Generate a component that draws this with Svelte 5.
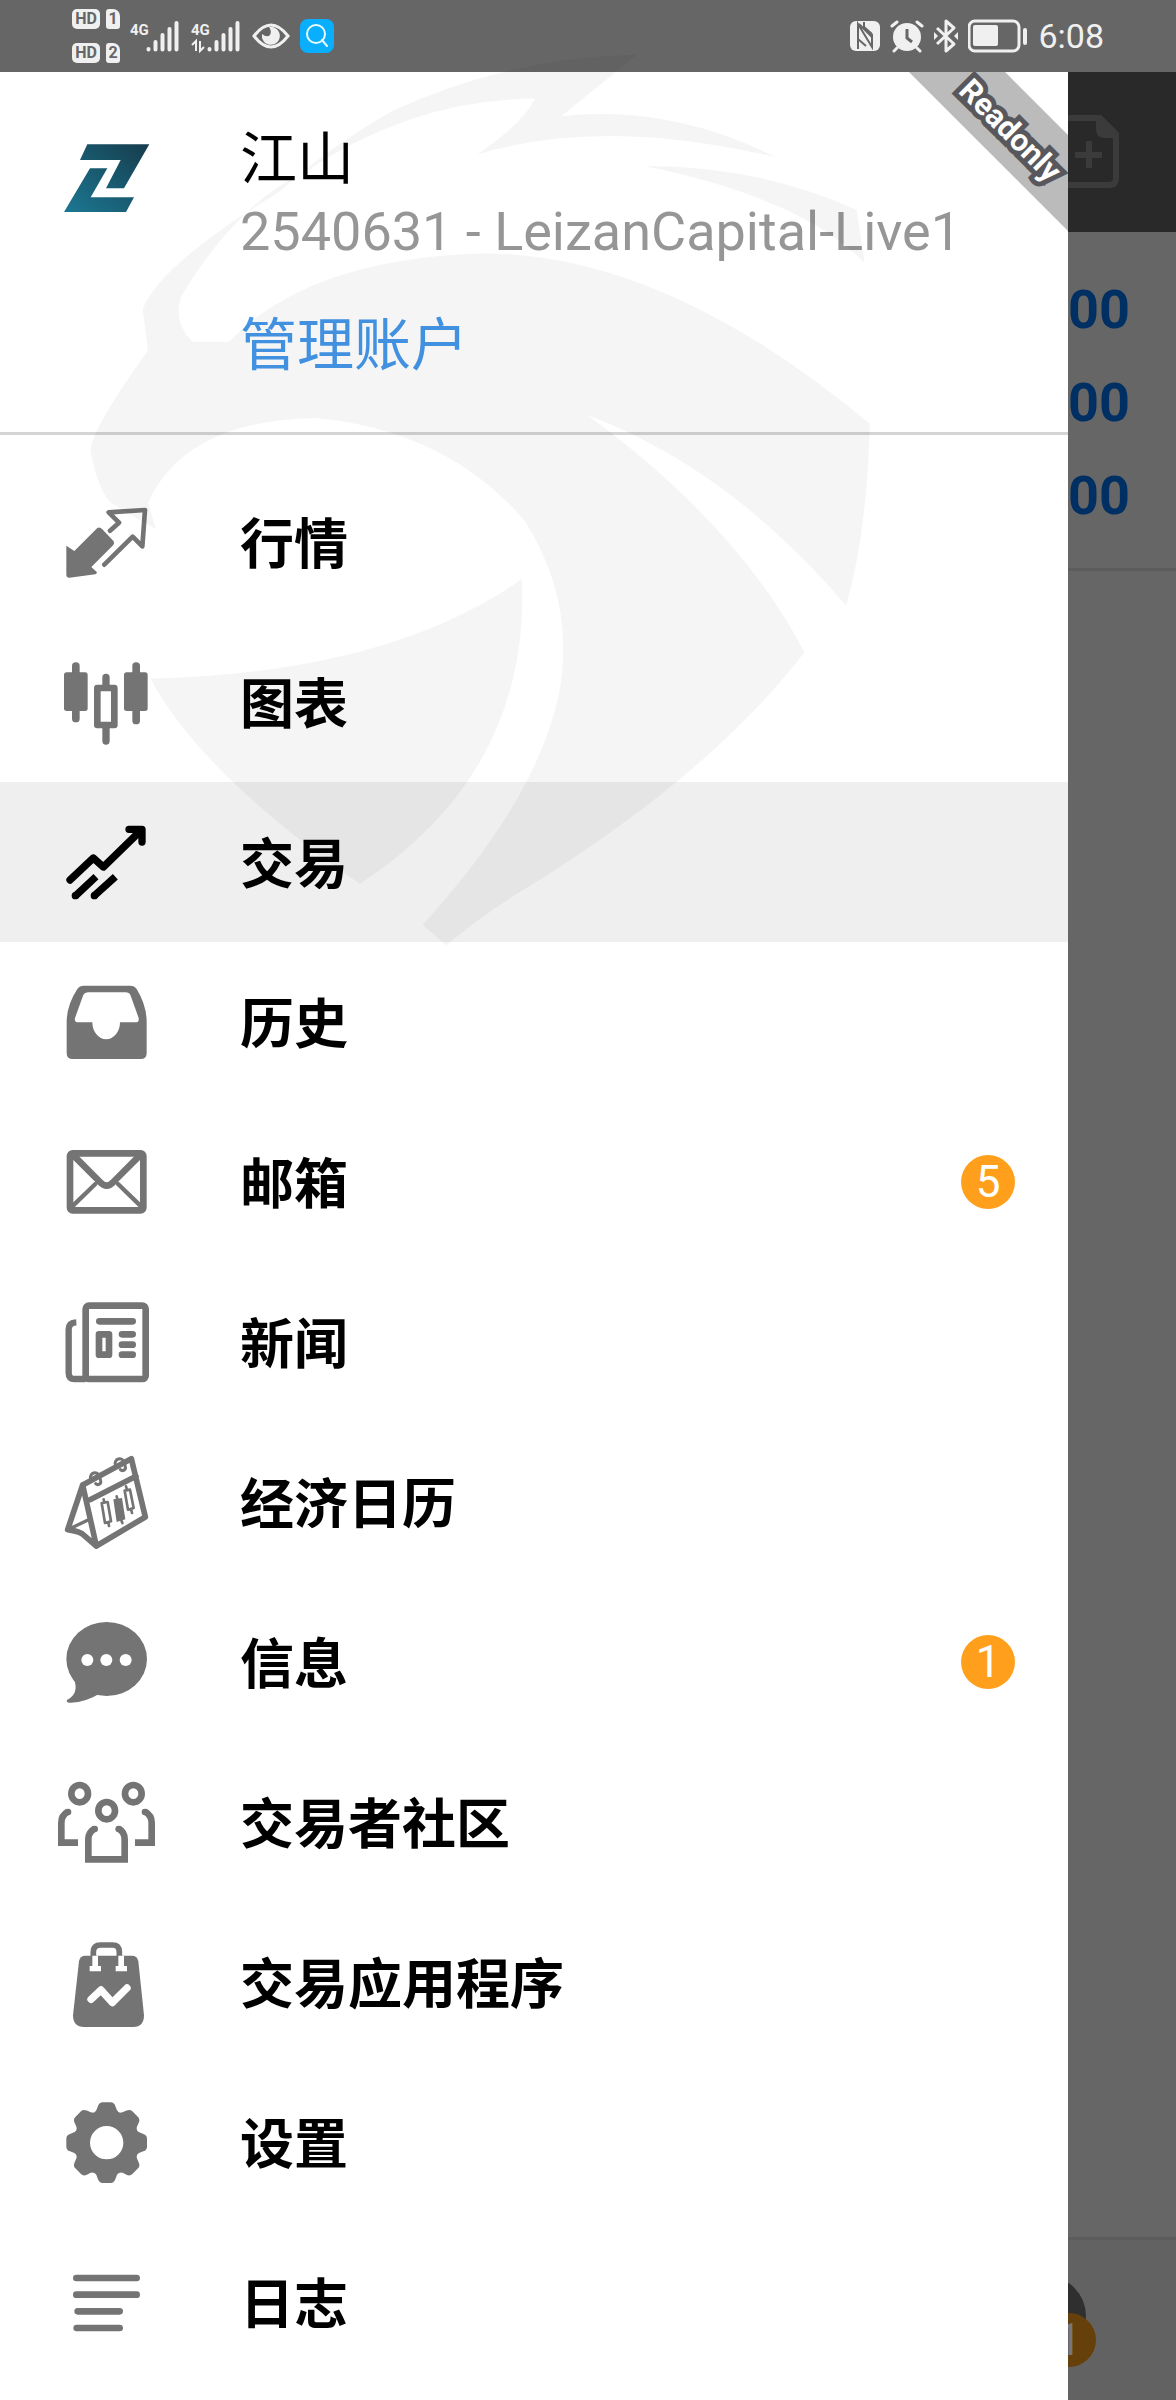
<script lang="ts">
  import type { Snippet } from 'svelte'

  interface MenuItem {
    label: string
    icon: Snippet
    badge?: number
  }

  const items: MenuItem[] = [
    { label: '行情', icon: quotes },
    { label: '图表', icon: charts },
    { label: '交易', icon: trade },
    { label: '历史', icon: history },
    { label: '邮箱', icon: mail, badge: 5 },
    { label: '新闻', icon: news },
    { label: '经济日历', icon: calendar },
    { label: '信息', icon: chat, badge: 1 },
    { label: '交易者社区', icon: community },
    { label: '交易应用程序', icon: apps },
    { label: '设置', icon: settings },
    { label: '日志', icon: journal }
  ]

  const amounts = ['00', '00', '00']
  const teeth = [0, 45, 90, 135, 180, 225, 270, 315]

  let active = $state('交易')
</script>

{#snippet quotes()}
  <svg class="icon" viewBox="0 0 300 300">
    <path class="line" stroke-width="14" d="M162 116 189 92 158 61 267 54 259 163 230 134 145 218" />
    <path d="M31 161 55 177 124 108Q132 104 139 112L173 148Q176 154 172 159L106 225 123 241Q122 246 118 247L40 257Q31 257 31 248Z" />
  </svg>
{/snippet}

{#snippet charts()}
  <svg class="icon" viewBox="0 0 300 300">
    <rect x="24" y="61" width="71" height="116" rx="8" />
    <rect x="48" y="31" width="23" height="180" rx="11" />
    <rect x="204" y="61" width="71" height="116" rx="8" />
    <rect x="229" y="31" width="23" height="186" rx="11" />
    <rect class="line" stroke-width="20" x="124" y="108" width="51" height="111" />
    <path class="line" stroke-width="22" d="M150 76V104M150 224V267" />
  </svg>
{/snippet}

{#snippet trade()}
  <svg class="icon" viewBox="0 0 300 300">
    <path class="line" stroke-width="22" d="M42 204 112 138 142 165 256 54M219 52H258V90" />
    <path class="line butt" stroke-width="22" d="M58 252 120 194M114 252 178 194" />
    <circle cx="58" cy="251" r="11" />
    <circle cx="115" cy="251" r="11" />
  </svg>
{/snippet}

{#snippet history()}
  <svg class="icon" viewBox="0 0 300 300">
    <path
      fill-rule="evenodd"
      d="M84 41H222Q236 41 242 51 272 100 272 150V243Q272 261 254 261H50Q32 261 32 243V150Q32 100 64 51 70 41 84 41ZM98 61H208Q220 61 224 71L248 138Q250 151 238 151H192A41 50 0 0 1 109 151H68Q54 151 57 138L81 71Q86 61 98 61Z"
    />
  </svg>
{/snippet}

{#snippet mail()}
  <svg class="icon" viewBox="0 0 300 300">
    <rect class="line" stroke-width="20" x="42" y="64" width="220" height="171" rx="8" />
    <path class="line" stroke-width="20" d="M50 68 132 150Q152 172 172 150L254 68" />
    <path class="line" stroke-width="13" d="M118 156 48 224M186 156 256 224" />
  </svg>
{/snippet}

{#snippet news()}
  <svg class="icon" viewBox="0 0 300 300">
    <rect class="line" stroke-width="20" x="89" y="41" width="180" height="220" rx="10" />
    <path class="line butt" stroke-width="19" d="M61 91Q38 92 38 112V242Q38 261 56 261H89" />
    <path class="line" stroke-width="20" d="M130 88H230M198 127H230M198 158H230M198 188H230" />
    <rect class="line" stroke-width="20" x="129" y="127" width="30" height="61" />
  </svg>
{/snippet}

{#snippet calendar()}
  <svg class="icon" viewBox="0 0 300 300">
    <path class="line" stroke-width="17" d="M80 99 226 20 268 195 121 282ZM102 143 240 73M80 99 35 233Q72 238 84 250L121 282" />
    <path class="line" stroke-width="10" d="M44 229 96 204" />
    <path class="line" stroke-width="9" d="M104 80A13 13 0 0 1 130 72L134 86A9 9 0 0 1 119 95M178 38A13 13 0 0 1 204 30L208 44A9 9 0 0 1 193 53" />
    <path class="line" stroke-width="8" d="M137 153 155 150 165 208 147 213ZM143 142 145 152M157 211 159 222M206 116 222 113 233 168 216 173ZM210 103 213 114M225 172 228 183M182 133 184 142M196 205 199 213" />
    <path d="M172 142 198 138 208 202 182 210Z" />
  </svg>
{/snippet}

{#snippet chat()}
  <svg class="icon" viewBox="0 0 300 300">
    <ellipse cx="152" cy="141" rx="121" ry="111" />
    <path d="M54 200Q70 245 33 264 29 273 45 272 90 270 130 245Z" />
    <g fill="#fff">
      <circle cx="94" cy="144" r="18" />
      <circle cx="151" cy="144" r="18" />
      <circle cx="209" cy="144" r="18" />
    </g>
  </svg>
{/snippet}

{#snippet community()}
  <svg class="icon" viewBox="0 0 300 300">
    <g class="line" stroke-width="20">
      <ellipse cx="71" cy="65" rx="25" ry="26" />
      <ellipse cx="232" cy="65" rx="25" ry="26" />
      <ellipse cx="152" cy="116" rx="25" ry="26" />
    </g>
    <path
      class="line butt"
      stroke-width="20"
      d="M116 170Q97 180 97 202V262H206V202Q206 180 188 170M36 119Q16 130 16 152V212H66M267 119Q287 130 287 152V212H237"
    />
    <circle cx="116" cy="171" r="10" />
    <circle cx="188" cy="171" r="10" />
    <circle cx="36" cy="120" r="10" />
    <circle cx="267" cy="120" r="10" />
  </svg>
{/snippet}

{#snippet apps()}
  <svg class="icon" viewBox="0 0 300 300">
    <path d="M88 71H228Q244 71 247 88L264 250Q264 285 232 285H84Q51 285 51 250L69 88Q72 71 88 71Z" />
    <path class="line butt" stroke-width="17" d="M112 75V60Q112 39 134 39H170Q190 39 190 60V75" />
    <path fill="#fff" d="M109 71H126V102H135V118H101V102H109ZM187 71H204V102H213V118H179V102H187Z" />
    <path class="line cut" stroke-width="22" d="M105 202 135 174 169 212 213 168" />
  </svg>
{/snippet}

{#snippet settings()}
  <svg class="icon" viewBox="0 0 300 300">
    <circle class="line" stroke-width="48" cx="152" cy="152" r="74" />
    {#each teeth as angle (angle)}
      <path transform="rotate({angle} 152 152)" d="M112 66Q123 56 126 42 130 31 140 31H164Q174 31 178 42 181 56 192 66Z" />
    {/each}
  </svg>
{/snippet}

{#snippet journal()}
  <svg class="icon" viewBox="0 0 300 300">
    <path class="line" stroke-width="20" d="M61 78H242M61 128H242M65 178H191M62 228H191" />
  </svg>
{/snippet}

{#snippet signal(data: boolean)}
  <svg class="signal" viewBox="0 0 50 34">
    <text x="0" y="16">4G</text>
    {#if data}
      <path d="M1 26 5 22V32M9 22V32L13 28" fill="none" stroke="#f0f0f0" stroke-width="2" />
    {/if}
    <path d="M18.500 30.500V30M25.500 30.500V23M32.500 30.500V16M39.500 30.500V10M46.500 30.500V4" stroke="#f0f0f0" stroke-width="4" stroke-linecap="round" />
  </svg>
{/snippet}

<div class="screen">
  <header class="status">
    <div class="sims">
      {#each [1, 2] as sim (sim)}
        <div class="sim"><span class="hd">HD</span><span class="slot">{sim}</span></div>
      {/each}
    </div>
    {@render signal(false)}
    {@render signal(true)}
    <svg class="eye" viewBox="0 0 38 28">
      <path d="M2 14Q19-8 36 14 19 36 2 14Z" fill="none" stroke="#f0f0f0" stroke-width="3" />
      <path d="M17 5A9 9 0 1 1 10 12Q15 16 18 13 20 9 17 5Z" fill="#f0f0f0" />
    </svg>
    <svg class="finder" viewBox="0 0 34 34">
      <rect width="34" height="34" rx="8" fill="#09aefc" />
      <circle cx="16" cy="15" r="9" fill="none" stroke="#e8fbff" stroke-width="2" />
      <path d="M22 21 27 27" stroke="#e8fbff" stroke-width="2" stroke-linecap="round" />
    </svg>
    <div class="system">
      <svg width="30" height="34" viewBox="0 0 30 34">
        <rect y="2" width="30" height="30" rx="6" fill="#f0f0f0" />
        <path d="M8 30V5L22 28V15M9 5 22 18M14 3V8L22 15M8 20 16 27" fill="none" stroke="#666" stroke-width="2" />
      </svg>
      <svg width="34" height="34" viewBox="0 0 34 34">
        <circle cx="17" cy="18" r="14" fill="#f0f0f0" />
        <path d="M17 10V19L22 23" fill="none" stroke="#666" stroke-width="3" />
        <path d="M2 7 7 3M32 7 27 3M7 29 4 32M27 29 30 32" stroke="#f0f0f0" stroke-width="3" stroke-linecap="round" />
      </svg>
      <svg width="24" height="36" viewBox="0 0 24 36">
        <path d="M3 10 20 26 12 33V3L20 10 3 26" fill="none" stroke="#f0f0f0" stroke-width="3" stroke-linejoin="round" />
        <path d="M0 14 4 18 0 22ZM24 14 20 18 24 22Z" fill="#f0f0f0" />
      </svg>
      <svg width="60" height="34" viewBox="0 0 60 34">
        <rect x="1" y="2" width="50" height="30" rx="6" fill="none" stroke="#f0f0f0" stroke-width="3" />
        <rect x="5" y="6" width="25" height="21" rx="2" fill="#f0f0f0" />
        <rect x="55" y="9" width="4" height="17" rx="2" fill="#f0f0f0" />
      </svg>
      <time datetime="06:08">6:08</time>
    </div>
  </header>

  <div class="body">
    <aside class="drawer">
      <section class="account">
        <svg class="icon" viewBox="0 0 300 300">
          <defs>
            <linearGradient id="brand" x1="0" y1="1" x2="1" y2="0">
              <stop offset="0" stop-color="#1c7893" />
              <stop offset="1" stop-color="#163c4c" />
            </linearGradient>
          </defs>
          <path
            fill="url(#brand)"
            d="M94 61H280L204 193H150L194 108H72ZM102 133H154L104 220H234L210 264H24Z"
          />
        </svg>
        <div class="details">
          <h1>江山</h1>
          <p>2540631 - LeizanCapital-Live1</p>
          <a href="#accounts">管理账户</a>
        </div>
        <div class="ribbon">Readonly</div>
      </section>

      <nav>
        {#each items as item (item.label)}
          <button class:active={item.label === active} onclick={() => (active = item.label)}>
            {@render item.icon()}
            <span class="label">{item.label}</span>
            {#if item.badge}
              <span class="badge">{item.badge}</span>
            {/if}
          </button>
        {/each}
      </nav>
    </aside>

    <main class="behind">
      <div class="toolbar">
        <svg width="56" height="160" viewBox="0 0 56 160">
          <path d="M0 46H32L48 62V106Q48 113 41 113H0M7 83H34M21 69V96" fill="none" stroke="#3b3b3b" stroke-width="6" />
          <path d="M28 43 51 66H37Q28 66 28 57Z" fill="#3b3b3b" />
        </svg>
      </div>
      <div class="amounts">
        {#each amounts as amount}
          <span>{amount}</span>
        {/each}
      </div>
      <div class="tabs">
        <span class="tab-icon"></span>
        <span class="badge dim">1</span>
      </div>
    </main>
  </div>

  <svg class="watermark" viewBox="0 0 1176 980" aria-hidden="true">
    <g transform="translate(80 40) scale(.523 .586)">
      <path
        d="M1065 25Q820 30 600 120 480 180 380 260 150 385 120 460L130 530Q25 660 20 700 35 770 60 790L145 835 130 790Q200 650 450 645 700 665 850 820 950 960 915 1120 870 1300 655 1510L700 1545Q760 1500 830 1460 1200 1260 1385 1045 1260 830 970 640 1240 730 1465 965 1505 840 1510 655 1100 350 740 365 430 380 285 515H215Q175 480 195 435 300 280 430 225 640 100 870 100 850 140 760 195 1000 130 1330 200 1130 110 920 130Z"
      />
      <path d="M845 920Q590 1080 135 1090 230 1250 535 1440 860 1250 845 920Z" />
      <path d="M1080 215Q1300 215 1485 290L1500 380Q1380 270 1080 215Z" />
    </g>
  </svg>
</div>

<style>
  :global(body) {
    margin: 0;
  }

  .screen {
    position: relative;
    display: flex;
    flex-direction: column;
    min-height: 100vh;
    background: #666;
    font-family: Roboto, 'Noto Sans CJK SC', sans-serif;
  }

  .status {
    display: flex;
    align-items: center;
    box-sizing: border-box;
    height: 72px;
    padding: 0 72px;
    color: #f0f0f0;
  }

  .sims {
    display: flex;
    flex-direction: column;
    gap: 14px;
    margin-right: 10px;
  }

  .sim {
    display: flex;
    gap: 6px;
    font-size: 16px;
    font-weight: bold;
    line-height: 20px;
    text-align: center;
    color: #666;
  }

  .hd {
    width: 28px;
    border-radius: 5px;
    background: #f0f0f0;
  }

  .slot {
    width: 14px;
    border-radius: 3px 7px 3px 3px;
    background: #f0f0f0;
  }

  .signal {
    width: 50px;
    height: 34px;
    margin-right: 11px;
  }

  .signal text {
    font-size: 15px;
    font-weight: bold;
    fill: #f0f0f0;
  }

  .eye {
    width: 38px;
    height: 28px;
    margin-right: 10px;
  }

  .finder {
    width: 34px;
    height: 34px;
  }

  .system {
    display: flex;
    align-items: center;
    gap: 10px;
    margin-left: auto;
  }

  time {
    font-size: 34px;
    line-height: 40px;
  }

  .body {
    display: flex;
    flex: 1;
  }

  .drawer {
    flex: 1;
    background: #fff;
  }

  .account {
    position: relative;
    display: flex;
    gap: 84px;
    padding: 52px 56px 50px;
    border-bottom: 3px solid #d4d4d4;
    overflow: hidden;
  }

  .icon {
    flex: none;
    width: 100px;
    height: 100px;
    fill: #747474;
    stroke: none;
    color: #747474;
  }

  .line {
    fill: none;
    stroke: currentColor;
    stroke-linecap: round;
    stroke-linejoin: round;
  }

  .butt {
    stroke-linecap: butt;
    stroke-linejoin: miter;
  }

  .cut {
    stroke: #fff;
  }

  h1,
  p {
    margin: 0;
    font-weight: normal;
    line-height: 72px;
  }

  h1 {
    font-size: 57px;
    color: #000;
  }

  p {
    font-size: 54px;
    color: #969696;
  }

  .details a {
    display: block;
    margin-top: 42px;
    font-size: 57px;
    line-height: 72px;
    color: #4596ea;
    text-decoration: none;
  }

  .ribbon {
    position: absolute;
    top: 19px;
    right: -92px;
    box-sizing: border-box;
    width: 300px;
    padding: 8px 0 0 8px;
    background: #bbbbbc;
    color: #fff;
    font-size: 31px;
    font-weight: bold;
    line-height: 60px;
    text-align: center;
    transform: rotate(45deg);
    -webkit-text-stroke: 10px #58585c;
    paint-order: stroke fill;
    stroke-linejoin: round;
  }

  nav {
    padding: 27px 0 18px;
  }

  nav button {
    display: flex;
    align-items: center;
    box-sizing: border-box;
    width: 100%;
    height: 160px;
    padding: 0 53px 0 56px;
    border: 0;
    background: none;
    font-family: inherit;
    color: #000;
    text-align: left;
  }

  nav .active {
    background: #efefef;
  }

  .active .icon {
    fill: #000;
    color: #000;
  }

  .label {
    flex: 1;
    margin-left: 84px;
    padding-top: 8px;
    font-size: 54px;
    font-weight: bold;
    line-height: 72px;
  }

  .badge {
    width: 54px;
    border-radius: 27px;
    background: #ff9f1c;
    color: #fff;
    font-size: 44px;
    line-height: 54px;
    text-align: center;
  }

  .behind {
    display: flex;
    flex-direction: column;
    width: 108px;
  }

  .toolbar {
    height: 160px;
    background: #292929;
  }

  .amounts {
    display: flex;
    flex-direction: column;
    padding: 31px 0 26px;
    border-bottom: 3px solid #5c5c5c;
    font-size: 54px;
    font-weight: bold;
    line-height: 93px;
    color: #003063;
  }

  .tabs {
    position: relative;
    height: 160px;
    margin-top: auto;
    border-top: 3px solid #5c5c5c;
    background: #626262;
    overflow: hidden;
  }

  .tab-icon {
    position: absolute;
    top: 36px;
    left: -62px;
    width: 80px;
    height: 80px;
    border-radius: 50%;
    background: #2f2f2f;
  }

  .dim {
    position: absolute;
    top: 73px;
    left: -26px;
    background: #66400b;
    color: #777;
  }

  .watermark {
    position: absolute;
    top: 0;
    left: 0;
    width: 100%;
    fill: #000;
    opacity: 0.036;
    pointer-events: none;
  }
</style>
